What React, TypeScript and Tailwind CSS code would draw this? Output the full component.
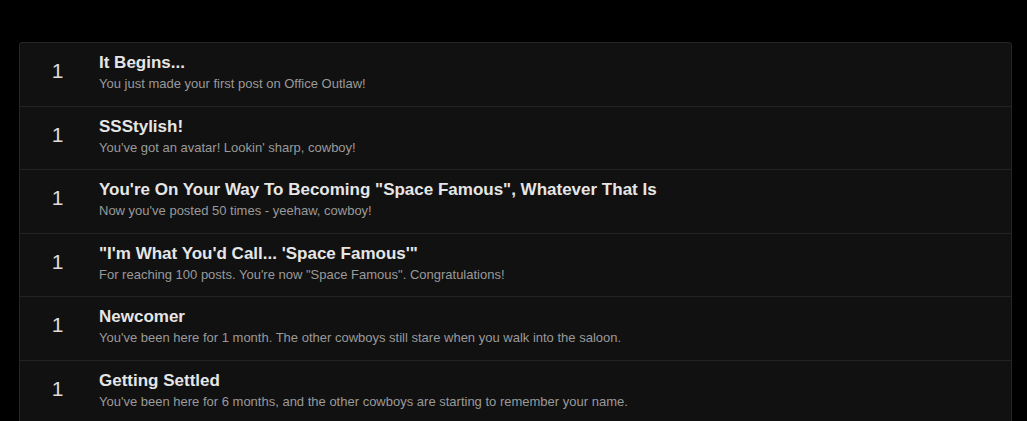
const badges = [
  { count: 1, title: "It Begins...", desc: "You just made your first post on Office Outlaw!" },
  { count: 1, title: "SSStylish!", desc: "You've got an avatar! Lookin' sharp, cowboy!" },
  {
    count: 1,
    title: 'You\'re On Your Way To Becoming "Space Famous", Whatever That Is',
    desc: "Now you've posted 50 times - yeehaw, cowboy!",
  },
  {
    count: 1,
    title: "\"I'm What You'd Call... 'Space Famous'\"",
    desc: 'For reaching 100 posts. You\'re now "Space Famous". Congratulations!',
  },
  {
    count: 1,
    title: "Newcomer",
    desc: "You've been here for 1 month. The other cowboys still stare when you walk into the saloon.",
  },
  {
    count: 1,
    title: "Getting Settled",
    desc: "You've been here for 6 months, and the other cowboys are starting to remember your name.",
  },
];

export default function App() {
  return (
    <div
      className="min-h-screen bg-black pt-[42px] pl-[19px] pr-[15px]"
      style={{ fontFamily: '"Liberation Sans", Arial, sans-serif' }}>
      <div className="rounded-[3px] border border-[#262626] bg-[#111111]">
        {badges.map((b, i) => (
          <div
            key={i}
            className={`flex items-start ${i > 0 ? "h-[63.5px] border-t border-[#242424]" : "h-[62.5px]"}`}>
            <div className="w-[75px] shrink-0 pt-[17px] text-center text-[21px] text-[#dcdcdc] leading-none">
              {b.count}
            </div>
            <div className="flex flex-col pl-[4px] pt-[8px]">
              <span className="text-[17px] font-bold leading-[24px] text-[#e6e6e6]">{b.title}</span>
              <span className="text-[13px] leading-[18px] text-[#9a9a9a]">{b.desc}</span>
            </div>
          </div>
        ))}
      </div>
    </div>
  );
}
